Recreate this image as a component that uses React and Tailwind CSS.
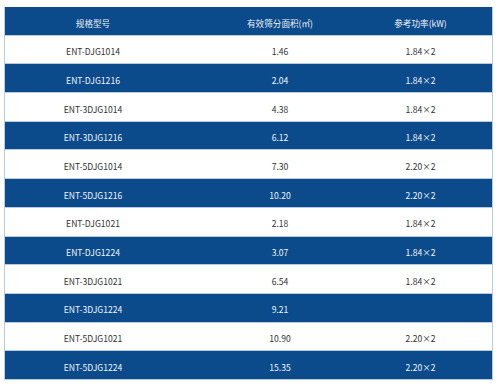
import React from "react";

const rows = [
  ["ENT-DJG1014", "1.46", "1.84×2"],
  ["ENT-DJG1216", "2.04", "1.84×2"],
  ["ENT-3DJG1014", "4.38", "1.84×2"],
  ["ENT-3DJG1216", "6.12", "1.84×2"],
  ["ENT-5DJG1014", "7.30", "2.20×2"],
  ["ENT-5DJG1216", "10.20", "2.20×2"],
  ["ENT-DJG1021", "2.18", "1.84×2"],
  ["ENT-DJG1224", "3.07", "1.84×2"],
  ["ENT-3DJG1021", "6.54", "1.84×2"],
  ["ENT-3DJG1224", "9.21", ""],
  ["ENT-5DJG1021", "10.90", "2.20×2"],
  ["ENT-5DJG1224", "15.35", "2.20×2"],
];

function Row({ cells, blue }) {
  return (
    <div
      className={`grid grid-cols-[176px_198px_1fr] h-[28.7px] items-center pt-[4px] border-b border-[#b9cbe0] ${
        blue ? "bg-[#0b4a8b] text-[#eef3f8]" : "bg-white text-[#333333]"
      }`}
    >
      <div className="text-center">{cells[0]}</div>
      <div className="text-center">{cells[1]}</div>
      <div className="text-center pr-[30px]">{cells[2]}</div>
    </div>
  );
}

export default function App() {
  return (
    <div
      className="w-[500px] h-[386px] bg-white pt-[7px] pl-[4px]"
      style={{ fontFamily: '"Noto Sans CJK SC", "Noto Sans", sans-serif' }}
    >
      <div className="w-[489px] border-x border-[#b9cbe0] text-[8.6px] leading-none">
        <Row cells={["规格型号", "有效筛分面积(㎡)", "参考功率(kW)"]} blue />
        {rows.map((r, i) => (
          <Row key={i} cells={r} blue={i % 2 === 1} />
        ))}
      </div>
    </div>
  );
}
